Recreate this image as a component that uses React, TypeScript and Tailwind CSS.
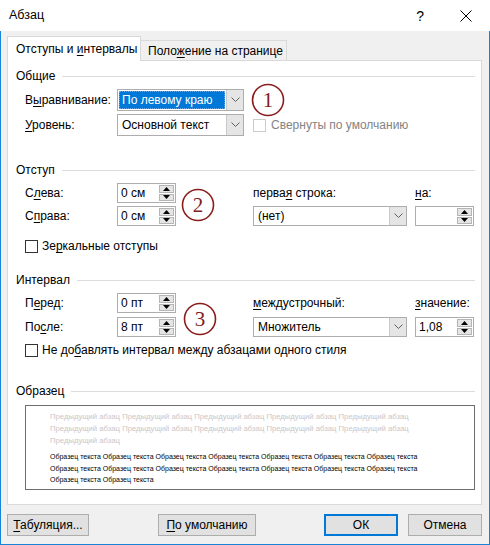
import React from "react";

function U({ children }: { children: React.ReactNode }) {
  return <span className="underline underline-offset-2">{children}</span>;
}

function Header({ title, className }: { title: string; className: string }) {
  return (
    <div className={`flex items-center h-[16px] pl-[8px] pr-[6px] ${className}`}>
      <span className="leading-none">{title}</span>
      <div className="ml-[7px] h-px flex-1 bg-[#dcdcdc]" />
    </div>
  );
}

function Chevron() {
  return (
    <svg width="9" height="6" viewBox="0 0 9 6">
      <path d="M0.5 0.5 L4.5 4.5 L8.5 0.5" fill="none" stroke="#606060" strokeWidth="1" />
    </svg>
  );
}

function Combo({ text, selected, tall }: { text: string; selected?: boolean; tall?: boolean }) {
  return (
    <div className={`flex ${tall ? "h-[22px]" : "h-[20px]"} border border-[#adadad] bg-white`}>
      <div className="flex-1 flex items-center p-px min-w-0">
        {selected ? (
          <div className="h-full w-full bg-[#0078d7] border border-dotted border-[#6aa8e8] text-white flex items-center pl-[2px] whitespace-nowrap">
            {text}
          </div>
        ) : (
          <div className="pl-[3px] whitespace-nowrap">{text}</div>
        )}
      </div>
      <div className="w-[17px] bg-[#e5e5e5] border-l border-[#c8c8c8] flex items-center justify-center">
        <Chevron />
      </div>
    </div>
  );
}

function Tri({ up }: { up?: boolean }) {
  return (
    <svg width="7" height="4" viewBox="0 0 7 4">
      {up ? <path d="M0 4 L3.5 0 L7 4 Z" fill="#000" /> : <path d="M0 0 L3.5 4 L7 0 Z" fill="#000" />}
    </svg>
  );
}

function Spinner({ text }: { text: string }) {
  return (
    <div className="flex h-[20px] border border-[#adadad] bg-white">
      <div className="flex-1 flex items-center pl-[3px] whitespace-nowrap">{text}</div>
      <div className="w-[16px] flex flex-col py-px pr-px gap-px">
        <div className="flex-1 bg-[#e5e5e5] border border-[#b5b5b5] flex items-center justify-center">
          <Tri up />
        </div>
        <div className="flex-1 bg-[#e5e5e5] border border-[#b5b5b5] flex items-center justify-center">
          <Tri />
        </div>
      </div>
    </div>
  );
}

function Circle({ n, className }: { n: string; className: string }) {
  return (
    <svg width="34" height="34" viewBox="0 0 34 34" className={`absolute ${className}`}>
      <circle cx="17" cy="17" r="15.5" fill="none" stroke="#8b1c1c" strokeWidth="1.6" />
      <text
        x="17"
        y="24"
        textAnchor="middle"
        fontFamily="'Liberation Serif', serif"
        fontSize="21"
        fill="#7f1d1d"
      >
        {n}
      </text>
    </svg>
  );
}

function Check({ disabled }: { disabled?: boolean }) {
  return (
    <div
      className={`w-[13px] h-[13px] bg-white border ${disabled ? "border-[#cccccc]" : "border-[#333333]"}`}
    />
  );
}

const gray = "Предыдущий абзац";
const sample = "Образец текста";

export default function App() {
  return (
    <div className="w-[490px] h-[545px] flex flex-col font-['Liberation_Sans',sans-serif] text-[12px] text-black leading-none select-none">
      {/* Title bar */}
      <div className="h-[31px] bg-white flex items-center pl-[9px] pr-[18px]">
        <span className="text-[12.5px]">Абзац</span>
        <div className="flex-1" />
        <span className="text-[14px] mr-[36px]">?</span>
        <svg width="12" height="12" viewBox="0 0 12 12">
          <path d="M0.5 0.5 L11.5 11.5 M11.5 0.5 L0.5 11.5" stroke="#000" strokeWidth="1" />
        </svg>
      </div>

      {/* Body */}
      <div className="flex-1 flex flex-col bg-[#f0f0f0] border-l border-r border-b border-[#1883d7] pl-[6px] pr-[7px]">
        {/* Tabs */}
        <div className="mt-[5px] h-[24px] flex items-end">
          <div className="relative z-10 -mb-px h-[25px] w-[134px] bg-white border-l border-t border-r border-[#d9d9d9] flex items-center pl-[8px] whitespace-nowrap">
            <span>
              Отступы и <U>и</U>нтервалы
            </span>
          </div>
          <div className="h-[20px] w-[146px] bg-[#f0f0f0] border-t border-r border-[#d9d9d9] flex items-center pl-[7px] whitespace-nowrap">
            <span>
              Поло<U>ж</U>ение на странице
            </span>
          </div>
        </div>

        {/* Panel */}
        <div className="relative h-[445px] w-[475px] bg-white border border-[#d9d9d9] flex flex-col">
          <Header title="Общие" className="mt-[7px]" />

          <div className="mt-[5px] grid grid-cols-[92px_127px_1fr] grid-rows-[22px_22px] gap-y-[3px] pl-[17px]">
            <div className="flex items-center">
              <span>
                В<U>ы</U>равнивание:
              </span>
            </div>
            <Combo text="По левому краю" selected tall />
            <div />
            <div className="flex items-center">
              <span>
                <U>У</U>ровень:
              </span>
            </div>
            <Combo text="Основной текст" tall />
            <div className="flex items-center pl-[9px] gap-[5px]">
              <Check disabled />
              <span className="text-[#838383]">Свернуты по умолчанию</span>
            </div>
          </div>

          <Header title="Отступ" className="mt-[26px]" />

          <div className="mt-[5px] grid grid-cols-[92px_59px_77px_154px_8px_59px] grid-rows-[20px_20px] gap-y-[3px] pl-[17px]">
            <div className="flex items-center">
              <span>
                С<U>л</U>ева:
              </span>
            </div>
            <Spinner text="0 см" />
            <div />
            <div className="flex items-center">
              <span>
                перва<U>я</U> строка:
              </span>
            </div>
            <div />
            <div className="flex items-center">
              <span>
                <U>н</U>а:
              </span>
            </div>

            <div className="flex items-center">
              <span>
                С<U>п</U>рава:
              </span>
            </div>
            <Spinner text="0 см" />
            <div />
            <Combo text="(нет)" />
            <div />
            <Spinner text="" />
          </div>

          <div className="mt-[12px] h-[16px] flex items-center pl-[17px] gap-[4px]">
            <Check />
            <span>
              Зе<U>р</U>кальные отступы
            </span>
          </div>

          <Header title="Интервал" className="mt-[18px]" />

          <div className="mt-[5px] grid grid-cols-[92px_59px_77px_154px_8px_59px] grid-rows-[20px_20px] gap-y-[4px] pl-[17px]">
            <div className="flex items-center">
              <span>
                П<U>е</U>ред:
              </span>
            </div>
            <Spinner text="0 пт" />
            <div />
            <div className="flex items-center">
              <span>
                <U>м</U>еждустрочный:
              </span>
            </div>
            <div />
            <div className="flex items-center">
              <span>
                <U>з</U>начение:
              </span>
            </div>

            <div className="flex items-center">
              <span>
                По<U>с</U>ле:
              </span>
            </div>
            <Spinner text="8 пт" />
            <div />
            <Combo text="Множитель" />
            <div />
            <Spinner text="1,08" />
          </div>

          <div className="mt-[5px] h-[16px] flex items-center pl-[17px] gap-[4px]">
            <Check />
            <span>
              Не до<U>б</U>авлять интервал между абзацами одного стиля
            </span>
          </div>

          <Header title="Образец" className="mt-[25px]" />

          <div className="mt-[6px] ml-[17px] w-[450px] h-[85px] border border-[#6e6e6e] bg-white pl-[24px] pt-[5px] font-['Liberation_Sans',sans-serif] text-[7px]">
            <div className="text-[#cbc6c8] text-[7.7px] leading-[12px] whitespace-nowrap">
              {`${gray} ${gray} ${gray} ${gray} ${gray}`}
            </div>
            <div className="text-[#cbc6c8] text-[7.7px] leading-[12px] whitespace-nowrap">
              {`${gray} ${gray} ${gray} ${gray} ${gray}`}
            </div>
            <div className="text-[#cbc6c8] text-[7.7px] leading-[12px] whitespace-nowrap">{gray}</div>
            <div className="mt-[4px] leading-[11.5px] whitespace-nowrap">
              {`${sample} ${sample} ${sample} ${sample} ${sample} ${sample} ${sample}`}
            </div>
            <div className="leading-[11.5px] whitespace-nowrap">
              {`${sample} ${sample} ${sample} ${sample} ${sample} ${sample} ${sample}`}
            </div>
            <div className="leading-[11.5px] whitespace-nowrap">{`${sample} ${sample}`}</div>
          </div>

          <Circle n="1" className="left-[243px] top-[22px]" />
          <Circle n="2" className="left-[173px] top-[127px]" />
          <Circle n="3" className="left-[175px] top-[241px]" />
        </div>

        {/* Buttons */}
        <div className="mt-[9px] h-[22px] flex">
          <button className="w-[82px] h-[22px] bg-[#e1e1e1] border border-[#adadad] flex items-center justify-center">
            <span>
              <U>Т</U>абуляция...
            </span>
          </button>
          <button className="ml-[69px] w-[98px] h-[22px] bg-[#e1e1e1] border border-[#adadad] flex items-center justify-center">
            <span>
              <U>П</U>о умолчанию
            </span>
          </button>
          <button className="ml-[68px] w-[74px] h-[22px] bg-[#e1e1e1] border-2 border-[#0078d7] flex items-center justify-center">
            ОК
          </button>
          <button className="ml-[10px] w-[74px] h-[22px] bg-[#e1e1e1] border border-[#adadad] flex items-center justify-center">
            Отмена
          </button>
        </div>
      </div>
    </div>
  );
}
